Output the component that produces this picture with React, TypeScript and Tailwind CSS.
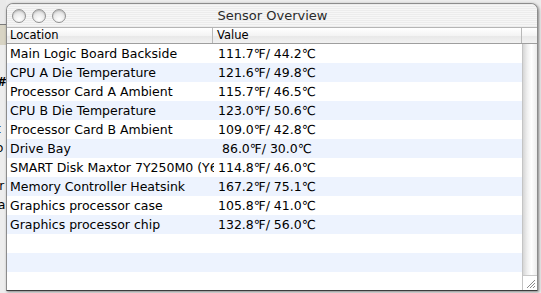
import React from "react"

const rows = [
  ["Main Logic Board Backside", "111.7℉/ 44.2℃"],
  ["CPU A Die Temperature", "121.6℉/ 49.8℃"],
  ["Processor Card A Ambient", "115.7℉/ 46.5℃"],
  ["CPU B Die Temperature", "123.0℉/ 50.6℃"],
  ["Processor Card B Ambient", "109.0℉/ 42.8℃"],
  ["Drive Bay", "\u00a086.0℉/ 30.0℃"],
  ["SMART Disk Maxtor 7Y250M0 (Y62FKT0E)", "114.8℉/ 46.0℃"],
  ["Memory Controller Heatsink", "167.2℉/ 75.1℃"],
  ["Graphics processor case", "105.8℉/ 41.0℃"],
  ["Graphics processor chip", "132.8℉/ 56.0℃"],
  ["", ""],
  ["", ""],
  ["", ""],
]

function Light() {
  return (
    <div className="w-[14px] h-[14px] rounded-full border border-[#909090] bg-[radial-gradient(circle_at_50%_75%,#ffffff_0%,#ebebeb_50%,#c4c4c4_100%)] shadow-[inset_0_1px_1px_rgba(0,0,0,0.12)]" />
  )
}

export default function App() {
  return (
    <div
      className="w-[541px] h-[293px] flex bg-[#ececec] overflow-hidden text-[#000]"
      style={{ fontFamily: '"DejaVu Sans", "Liberation Sans", sans-serif' }}
    >
      {/* window behind, barely visible on the left */}
      <div className="w-[6px] flex flex-col overflow-hidden shrink-0">
        <div className="h-[25px] bg-[#e9e9e9] border-b border-[#7a7a7a]" />
        <div className="h-[20px] bg-[#d8d4c4]" />
        <div className="flex-1 bg-[#ededed] flex flex-col text-[12px] leading-[19px]">
          <div className="h-[28px]" />
          <div className="-ml-[3px] font-bold">#</div>
          <div className="h-[28px]" />
          <div className="-ml-[4px]">t</div>
          <div className="-ml-[4px]">o</div>
          <div className="h-[19px]" />
          <div className="-ml-[4px]">ir</div>
          <div className="-ml-[2px]">a</div>
        </div>
      </div>

      <div className="mt-[3px] w-[532px] h-[288px] flex flex-col rounded-t-[7px] border border-[#8c8c8c] border-b-[#3c3c3c] bg-white overflow-hidden shadow-[1px_1px_3px_rgba(0,0,0,0.45)]">
        <div className="h-[24px] shrink-0 relative flex items-center bg-[repeating-linear-gradient(0deg,#ececec_0px,#ececec_1px,#f6f6f6_1px,#f6f6f6_2px)] border-b border-[#b5b5b5]">
          <div className="flex gap-[6px] pl-[5px] pt-[1px]">
            <Light />
            <Light />
            <Light />
          </div>
          <div className="flex-1 text-center text-[13px] text-[#2a2a2a] pr-[58px] pt-[1px]">Sensor Overview</div>
        </div>

        <div className="h-[16px] shrink-0 flex text-[11.5px] leading-[15px] bg-[linear-gradient(#ffffff,#f4f4f4_50%,#e8e8e8_51%,#f1f1f1)] border-b border-[#9e9e9e]">
          <div className="w-[206px] pl-[3px] border-r border-[#b8b8b8]">Location</div>
          <div className="flex-1 pl-[4px] border-r border-[#b8b8b8]">Value</div>
          <div className="w-[15px]" />
        </div>

        <div className="flex-1 flex min-h-0">
          <div className="flex-1 flex flex-col text-[12.5px] leading-[19px]">
            {rows.map((r, i) => (
              <div key={i} className={`h-[19px] shrink-0 flex ${i % 2 === 1 ? "bg-[#edf3fe]" : "bg-white"}`}>
                <div className="w-[207px] shrink-0 pl-[3px] overflow-hidden whitespace-nowrap">{r[0]}</div>
                <div className="flex-1 pl-[4px] whitespace-pre">{r[1]}</div>
              </div>
            ))}
          </div>
          <div className="w-[15px] flex flex-col border-l border-[#c4c4c4]">
            <div className="flex-1 bg-[linear-gradient(90deg,#d6d6d6,#efefef_30%,#ffffff_60%,#ececec)]" />
            <div className="h-[15px] bg-white border-t border-[#c9c9c9] flex items-end justify-end p-[1px]">
              <svg width="11" height="11" viewBox="0 0 11 11">
                <path d="M10 2 L2 10 M10 5 L5 10 M10 8 L8 10" stroke="#8a8a8a" strokeWidth="1" />
              </svg>
            </div>
          </div>
        </div>
      </div>
    </div>
  )
}
